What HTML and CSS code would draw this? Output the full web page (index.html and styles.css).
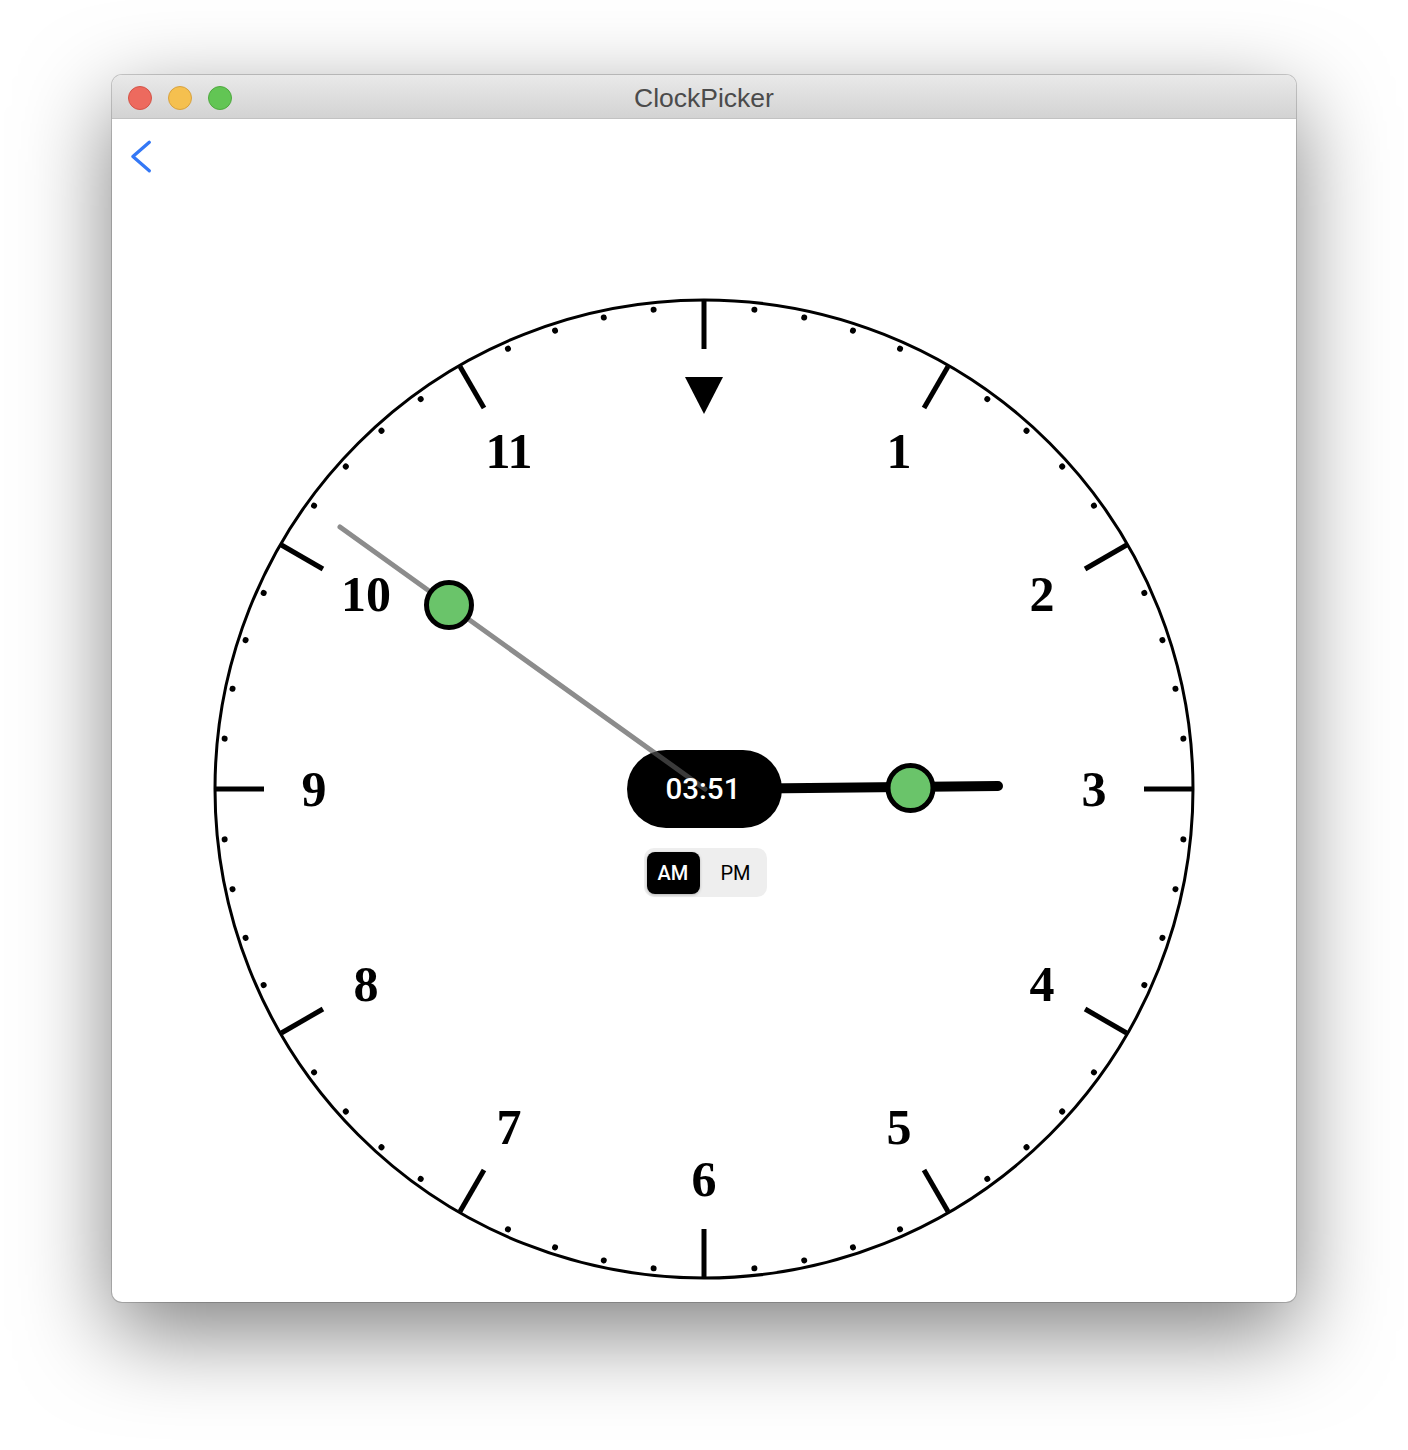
FILE: index.html
```html
<!DOCTYPE html>
<html lang="en">
<head>
<meta charset="utf-8">
<title>ClockPicker</title>
<link rel="stylesheet" href="styles.css">
</head>
<body>
<div class="stage">
  <div class="window">
    <div class="titlebar">
      <div class="lights">
        <span class="light red"></span>
        <span class="light yellow"></span>
        <span class="light green"></span>
      </div>
      <div class="title">ClockPicker</div>
    </div>
    <div class="content">
      <div class="toolbar">
        <button class="back" aria-label="Back">
          <svg width="24" height="36" viewBox="0 0 24 36"><path d="M19.3 3.3 L2.9 17.6 L19.3 31.8" fill="none" stroke="#3478f6" stroke-width="3.3" stroke-linecap="round" stroke-linejoin="round"/></svg>
        </button>
      </div>
      <div class="clock-area">
        <div class="clock">
          <svg class="dial" width="1000" height="1000" viewBox="0 0 1000 1000">
            <defs>
              <line id="tick" x1="500" y1="12" x2="500" y2="60" stroke="#000" stroke-width="5"/>
              <circle id="dot" cx="500" cy="18" r="3" fill="#000"/>
            </defs>
            <circle cx="500" cy="500" r="489" fill="#fff" stroke="#000" stroke-width="3"/>
            <g class="ticks">
              <use href="#tick"/>
              <use href="#tick" transform="rotate(30 500 500)"/>
              <use href="#tick" transform="rotate(60 500 500)"/>
              <use href="#tick" transform="rotate(90 500 500)"/>
              <use href="#tick" transform="rotate(120 500 500)"/>
              <use href="#tick" transform="rotate(150 500 500)"/>
              <use href="#tick" transform="rotate(180 500 500)"/>
              <use href="#tick" transform="rotate(210 500 500)"/>
              <use href="#tick" transform="rotate(240 500 500)"/>
              <use href="#tick" transform="rotate(270 500 500)"/>
              <use href="#tick" transform="rotate(300 500 500)"/>
              <use href="#tick" transform="rotate(330 500 500)"/>
            </g>
            <g class="dots">
              <use href="#dot" transform="rotate(6 500 500)"/>
              <use href="#dot" transform="rotate(12 500 500)"/>
              <use href="#dot" transform="rotate(18 500 500)"/>
              <use href="#dot" transform="rotate(24 500 500)"/>
              <use href="#dot" transform="rotate(36 500 500)"/>
              <use href="#dot" transform="rotate(42 500 500)"/>
              <use href="#dot" transform="rotate(48 500 500)"/>
              <use href="#dot" transform="rotate(54 500 500)"/>
              <use href="#dot" transform="rotate(66 500 500)"/>
              <use href="#dot" transform="rotate(72 500 500)"/>
              <use href="#dot" transform="rotate(78 500 500)"/>
              <use href="#dot" transform="rotate(84 500 500)"/>
              <use href="#dot" transform="rotate(96 500 500)"/>
              <use href="#dot" transform="rotate(102 500 500)"/>
              <use href="#dot" transform="rotate(108 500 500)"/>
              <use href="#dot" transform="rotate(114 500 500)"/>
              <use href="#dot" transform="rotate(126 500 500)"/>
              <use href="#dot" transform="rotate(132 500 500)"/>
              <use href="#dot" transform="rotate(138 500 500)"/>
              <use href="#dot" transform="rotate(144 500 500)"/>
              <use href="#dot" transform="rotate(156 500 500)"/>
              <use href="#dot" transform="rotate(162 500 500)"/>
              <use href="#dot" transform="rotate(168 500 500)"/>
              <use href="#dot" transform="rotate(174 500 500)"/>
              <use href="#dot" transform="rotate(186 500 500)"/>
              <use href="#dot" transform="rotate(192 500 500)"/>
              <use href="#dot" transform="rotate(198 500 500)"/>
              <use href="#dot" transform="rotate(204 500 500)"/>
              <use href="#dot" transform="rotate(216 500 500)"/>
              <use href="#dot" transform="rotate(222 500 500)"/>
              <use href="#dot" transform="rotate(228 500 500)"/>
              <use href="#dot" transform="rotate(234 500 500)"/>
              <use href="#dot" transform="rotate(246 500 500)"/>
              <use href="#dot" transform="rotate(252 500 500)"/>
              <use href="#dot" transform="rotate(258 500 500)"/>
              <use href="#dot" transform="rotate(264 500 500)"/>
              <use href="#dot" transform="rotate(276 500 500)"/>
              <use href="#dot" transform="rotate(282 500 500)"/>
              <use href="#dot" transform="rotate(288 500 500)"/>
              <use href="#dot" transform="rotate(294 500 500)"/>
              <use href="#dot" transform="rotate(306 500 500)"/>
              <use href="#dot" transform="rotate(312 500 500)"/>
              <use href="#dot" transform="rotate(318 500 500)"/>
              <use href="#dot" transform="rotate(324 500 500)"/>
              <use href="#dot" transform="rotate(336 500 500)"/>
              <use href="#dot" transform="rotate(342 500 500)"/>
              <use href="#dot" transform="rotate(348 500 500)"/>
              <use href="#dot" transform="rotate(354 500 500)"/>
            </g>
            <polygon points="481,88 519,88 500,125" fill="#000"/>
            <g class="numbers">
              <text x="695" y="179">1</text>
              <text x="838" y="322">2</text>
              <text x="890" y="517">3</text>
              <text x="838" y="712">4</text>
              <text x="695" y="855">5</text>
              <text x="500" y="907">6</text>
              <text x="305" y="855">7</text>
              <text x="162" y="712">8</text>
              <text x="110" y="517">9</text>
              <text x="162" y="322">10</text>
              <text x="305" y="179">11</text>
            </g>
            <line x1="500" y1="500" x2="794" y2="497" stroke="#000" stroke-width="10" stroke-linecap="round"/>
            <circle cx="706.5" cy="499" r="22.5" fill="#6ac46a" stroke="#000" stroke-width="5"/>
            <rect x="423" y="461" width="155" height="78" rx="39" fill="#000"/>
            <line x1="501" y1="500" x2="136" y2="238" stroke="rgb(86,86,86)" stroke-opacity="0.68" stroke-width="5" stroke-linecap="round"/>
            <text class="time" x="499" y="509.5">03:51</text>
            <circle cx="245" cy="316" r="22.5" fill="#6ac46a" stroke="#000" stroke-width="5"/>
          </svg>
          <div class="ampm">
            <div class="segmented">
              <button class="seg selected">AM</button>
              <button class="seg">PM</button>
            </div>
          </div>
        </div>
      </div>
    </div>
  </div>
</div>
</body>
</html>
```

FILE: styles.css
```css
html, body {
  margin: 0;
  padding: 0;
  background: #ffffff;
}

body {
  font-family: "Liberation Sans", Arial, sans-serif;
}

.stage {
  padding: 75px 0 0 112px;
  height: 1450px;
  box-sizing: border-box;
}

.window {
  width: 1184px;
  height: 1227px;
  border-radius: 10px;
  overflow: hidden;
  background: #ffffff;
  box-shadow: 0 30px 90px rgba(0, 0, 0, 0.5), 0 0 0 1px rgba(0, 0, 0, 0.18);
  display: flex;
  flex-direction: column;
}

.titlebar {
  height: 44px;
  box-sizing: border-box;
  padding-top: 3px;
  flex: none;
  background: linear-gradient(#e9e9e9, #d3d3d3);
  border-bottom: 1px solid #c2c2c2;
  display: flex;
  align-items: center;
  position: relative;
}

.lights {
  display: flex;
  gap: 16px;
  padding-left: 16px;
  position: relative;
  z-index: 1;
}

.light {
  width: 22px;
  height: 22px;
  border-radius: 50%;
  box-sizing: content-box;
  border: 1px solid;
}

.red { background: #ed6a5e; border-color: #d45448; }
.yellow { background: #f5c04f; border-color: #d8a23f; }
.green { background: #62c554; border-color: #4fa93f; }

.title {
  position: absolute;
  top: 3px;
  left: 0;
  right: 0;
  text-align: center;
  font-size: 26.5px;
  color: #4b4b4b;
  line-height: 40px;
}

.content {
  flex: 1;
  display: flex;
  flex-direction: column;
}

.toolbar {
  height: 156px;
  flex: none;
}

.back {
  display: block;
  margin: 20px 0 0 18px;
  padding: 0;
  border: 0;
  background: none;
  width: 24px;
  height: 36px;
}

.back svg {
  display: block;
}

.clock-area {
  flex: 1;
  display: flex;
  align-items: center;
  justify-content: center;
}

.clock {
  position: relative;
  width: 1000px;
  height: 1000px;
}

.dial {
  display: block;
}

.numbers text {
  font-family: "Liberation Serif", "Times New Roman", serif;
  font-weight: bold;
  font-size: 50px;
  text-anchor: middle;
  fill: #000;
}

.time {
  font-family: Roboto, "Liberation Sans", Arial, sans-serif;
  font-weight: 500;
  font-size: 29.5px;
  text-anchor: middle;
  fill: #fff;
}

.ampm {
  position: absolute;
  top: 559px;
  left: 0;
  right: 0;
  display: flex;
  justify-content: center;
}

.segmented {
  display: flex;
  padding: 4px 3px 3px 3px;
  background: #eeeeee;
  border-radius: 10px;
  margin-left: 2px;
}

.seg {
  height: 42px;
  border: 0;
  border-radius: 8px;
  background: transparent;
  font-family: Roboto, "Liberation Sans", Arial, sans-serif;
  font-size: 20px;
  color: #000;
  padding: 0;
}

.seg:first-child {
  width: 53px;
}

.seg:last-child {
  width: 64px;
  padding-left: 8px;
}

.seg.selected {
  background: #000;
  color: #fff;
  font-weight: 500;
  box-shadow: 0 1px 3px rgba(0, 0, 0, 0.25);
}
```
